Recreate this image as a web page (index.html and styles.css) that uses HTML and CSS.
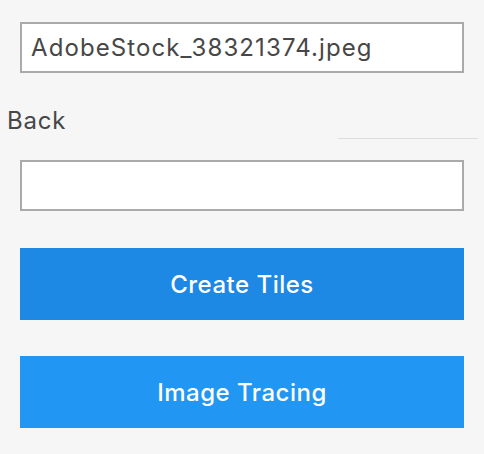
FILE: index.html
```html
<!DOCTYPE html>
<html lang="en">
<head>
    <meta charset="UTF-8">
    <meta name="viewport" content="width=device-width, initial-scale=1.0">
    <title>Tiles</title>
    <link rel="stylesheet" href="styles.css">
</head>
<body>
    <div class="panel">
        <!-- File name -->
        <input class="field" type="text" id="fileName" value="AdobeStock_38321374.jpeg">

        <div class="back-row">
            <span class="back">Back</span>
            <span class="divider"></span>
        </div>

        <input class="field field-second" type="text" id="extra" value="">

        <button class="action create">Create Tiles</button>
        <button class="action tracing">Image Tracing</button>
    </div>
</body>
</html>
```

FILE: styles.css
```css
body {
    font-family: Inter, "Noto Sans", sans-serif;
    background-color: #f6f6f6;
    color: #474747;
    margin: 0;
    padding: 0;
}

.panel {
    display: flex;
    flex-direction: column;
    padding-top: 22px;
}

.field {
    box-sizing: border-box;
    margin: 0 20px;
    height: 51px;
    padding: 0 9px;
    border: 2px solid #aaa;
    background: #fff;
    font-family: Inter, "Noto Sans", sans-serif;
    font-size: 24px;
    letter-spacing: 1.1px;
    color: #474747;
    outline: none;
}

.back-row {
    display: flex;
    justify-content: space-between;
    align-items: flex-start;
    margin: 33px 6px 0 7px;
    height: 29px;
}

.back {
    font-size: 24px;
    line-height: 29px;
    letter-spacing: 0.8px;
}

.divider {
    width: 140px;
    height: 1px;
    margin-top: 32px;
    background: #ddd;
}

.field-second {
    margin-top: 25px;
}

.action {
    margin: 37px 20px 0;
    height: 72px;
    border: none;
    color: #fff;
    font-family: Inter, "Noto Sans", sans-serif;
    font-size: 24px;
    font-weight: 500;
    letter-spacing: 0.5px;
    cursor: pointer;
}

.create {
    background-color: #1e88e5;
}

.tracing {
    margin-top: 36px;
    background-color: #2196f3;
}
```
